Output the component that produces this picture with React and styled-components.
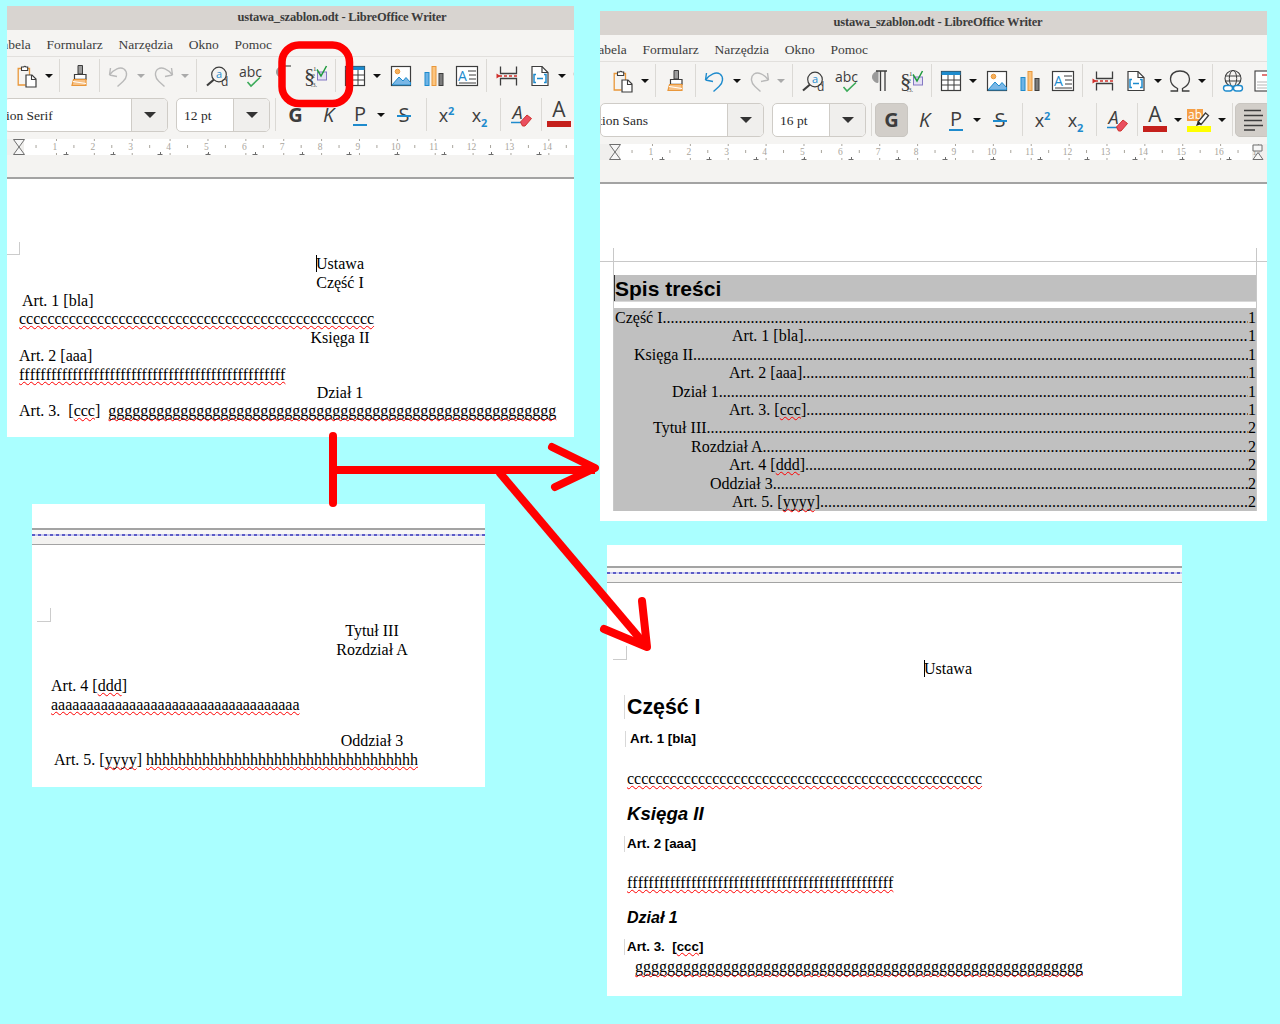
import React from "react";
import styled, { createGlobalStyle } from "styled-components";

const GlobalStyle = createGlobalStyle`
  html, body {
    margin: 0;
    padding: 0;
    background: #aaffff;
    font-family: "Liberation Serif", serif;
  }
`;

const Desktop = styled.div`
  position: relative;
  width: 1280px;
  height: 1024px;
  overflow: hidden;
  background: #aaffff;
`;

const Window = styled.div`
  position: absolute;
  left: ${(p) => p.$x}px;
  top: ${(p) => p.$y}px;
  width: ${(p) => p.$w}px;
  height: ${(p) => p.$h}px;
  overflow: hidden;
  background: #ffffff;
  color: #000000;
`;

const TitleBar = styled.div`
  height: 24px;
  background: #d8d4d0;
`;

const TitleText = styled.div`
  width: ${(p) => p.$center * 2}px;
  color: #3c3c3c;
  font-size: 12.5px;
  letter-spacing: -0.2px;
  font-weight: bold;
  line-height: 22px;
  text-align: center;
  white-space: nowrap;
`;

const Chrome = styled.div`
  width: 700px;
  margin-left: ${(p) => p.$shift}px;
`;

const MenuBackground = styled.div`
  background: #f5f4f2;
  border-bottom: 1px solid #e2e0dd;
  margin-left: ${(p) => -p.$shift}px;
`;

const MenuBar = styled.div`
  height: 26px;
  display: flex;
  align-items: center;
  gap: 15.7px;
  padding-top: 4px;
  box-sizing: border-box;
  margin-left: ${(p) => p.$shift - 9}px;
  font-size: 13.5px;
  color: #3c3c3c;
  white-space: nowrap;
`;

const ToolRow = styled.div`
  height: 36px;
  display: flex;
  align-items: center;
  box-sizing: border-box;
  padding: 1px 0 0 6px;
  background: #f5f4f2;
  width: 760px;
`;

const Slot = styled.div`
  flex: 0 0 33px;
  height: 24px;
  margin-left: ${(p) => p.$ml || 0}px;
  display: flex;
  align-items: center;
  justify-content: center;
`;

const DropArrow = styled.div`
  flex: 0 0 11px;
  height: 24px;
  display: flex;
  align-items: center;
  justify-content: center;

  &::after {
    content: "";
    border-left: 4px solid transparent;
    border-right: 4px solid transparent;
    border-top: 4px solid ${(p) => (p.$off ? "#aaaaaa" : "#111111")};
  }
`;

const Divider = styled.div`
  flex: 0 0 1px;
  height: 33px;
  margin: 0 ${(p) => p.$mr}px 0 ${(p) => p.$ml}px;
  background: #dbd9d5;
`;

const FormatRow = styled.div`
  height: 46px;
  display: flex;
  align-items: flex-start;
  padding-top: 5px;
  box-sizing: border-box;
  background: #f5f4f2;
  width: 760px;

  ${DropArrow}, ${Slot} {
    height: 34px;
  }
`;

const Combo = styled.div`
  flex: 0 0 ${(p) => p.$w}px;
  height: 34px;
  box-sizing: border-box;
  display: flex;
  margin-left: ${(p) => p.$ml || 0}px;
  border: 1px solid #cfccc7;
  border-radius: 5px;
  background: #ffffff;
  overflow: hidden;
`;

const ComboText = styled.div`
  flex: 1;
  overflow: hidden;
  white-space: pre;
  font-size: 13.5px;
  line-height: 34px;
  color: #2a2a2a;
  text-indent: ${(p) => p.$indent}px;
`;

const ComboButton = styled.div`
  flex: 0 0 35px;
  border-left: 1px solid #cfccc7;
  background: #f0efed;
  display: flex;
  align-items: center;
  justify-content: center;

  &::after {
    content: "";
    border-left: 6px solid transparent;
    border-right: 6px solid transparent;
    border-top: 6px solid #333333;
  }
`;

const FormatButton = styled.div`
  flex: 0 0 ${(p) => p.$w || 33}px;
  height: 34px;
  box-sizing: border-box;
  display: flex;
  align-items: center;
  justify-content: center;
  border-radius: 5px;
  color: #3d3d3d;
  font-family: "Open Sans", sans-serif;
  font-size: 20px;
  line-height: 1;
  background: ${(p) => (p.$on ? "#d2cec9" : "transparent")};
  border: 1px solid ${(p) => (p.$on ? "#c9c6c1" : "transparent")};
`;

const BoldGlyph = styled.span`
  font-weight: 700;
`;

const ItalicGlyph = styled.span`
  font-style: italic;
`;

const UnderGlyph = styled.span`
  border-bottom: 2px solid #1e8bcd;
  line-height: 20px;
  padding: 0 1px;
`;

const StrikeGlyph = styled.span`
  position: relative;
  padding: 0 2px;

  &::after {
    content: "";
    position: absolute;
    left: 0;
    right: 0;
    top: 10px;
    height: 2px;
    background: #1e8bcd;
  }
`;

const ScriptGlyph = styled.span`
  font-size: 18px;

  sup,
  sub {
    color: #1e8bcd;
    font-size: 11px;
    font-weight: 700;
    line-height: 0;
  }
`;

const FontColor = styled.div`
  flex: 0 0 34px;
  display: flex;
  flex-direction: column;
  align-items: center;
  height: 34px;
  font-family: "Open Sans", sans-serif;
  font-size: 21px;
  line-height: 23px;
  color: #3d3d3d;

  &::after {
    content: "";
    width: 24px;
    height: 6px;
    background: ${(p) => p.$bar};
  }
`;

const HighlightBox = styled.div`
  position: relative;
  flex: 0 0 24px;
  height: 23px;
  margin: 6px 5px 0 4px;
  font-family: "Open Sans", sans-serif;

  &::after {
    content: "";
    position: absolute;
    left: 0;
    top: 17px;
    width: 24px;
    height: 6px;
    background: #ffff00;
  }
`;

const HighlightText = styled.div`
  width: 16px;
  height: 12px;
  background: #f59f45;
  color: #ffffff;
  font-size: 12px;
  line-height: 11px;
  text-align: center;
`;

const PenIcon = styled.svg`
  position: absolute;
  left: 9px;
  top: 2px;
`;

const RulerBar = styled.svg`
  display: block;
  flex: none;
`;

const Band = styled.div`
  height: 22px;
  background: #f4f3f1;
  border-bottom: 2px solid #a3a3a3;
  margin-left: ${(p) => -p.$shift}px;
`;

const PageBreak = styled.div`
  margin-top: ${(p) => p.$top}px;
  height: 14px;
  background: linear-gradient(#f8f7f6 0 50%, #f3f2f0 50%);
  border-top: 2px solid #a3a3a3;
  border-bottom: 1px solid #a3a3a3;
  position: relative;

  &::after {
    content: "";
    display: block;
    height: 2px;
    margin-top: 4px;
    position: absolute;
    left: 0;
    right: 0;
    background: repeating-linear-gradient(90deg, #5c5cc6 0 3px, #c8c8f0 3px 6px);
  }
`;

const DocBody = styled.div`
  font-family: "Liberation Serif", serif;
  font-size: 16px;
  line-height: 18.36px;
  color: #000000;
  font-variant-ligatures: none;
`;

const CropMark = styled.div`
  width: ${(p) => p.$size}px;
  height: ${(p) => p.$size}px;
  margin-left: ${(p) => p.$left}px;
  margin-top: ${(p) => p.$top}px;
  box-sizing: border-box;
  border-right: 1px solid #cccccc;
  border-bottom: 1px solid #cccccc;
`;

const TextLine = styled.div`
  min-height: 18.36px;
  white-space: pre;
  padding-left: ${(p) => p.$at || 0}px;
  margin-top: ${(p) => p.$mt || 0}px;
`;

const CenterLine = styled.div`
  width: ${(p) => p.$center * 2}px;
  text-align: center;
  white-space: pre;
`;

const Caret = styled.span`
  display: inline-block;
  width: 1px;
  height: 17px;
  margin-right: -1px;
  background: #000000;
  vertical-align: -3px;
`;

const Misspelled = styled.span`
  font-kerning: none;
  text-decoration: underline wavy #ff0000;
  text-decoration-thickness: 1.3px;
  text-underline-offset: 1px;
  text-decoration-skip-ink: none;
`;

const SansBlock = styled.div`
  position: relative;
  font-family: "Liberation Sans", sans-serif;
  font-weight: bold;
  font-style: ${(p) => (p.$italic ? "italic" : "normal")};
  font-size: ${(p) => p.$size}px;
  line-height: ${(p) => p.$lh}px;
  margin-top: ${(p) => p.$mt}px;
  padding-left: ${(p) => p.$at}px;
  white-space: pre;
`;

const ParaMark = styled.span`
  position: absolute;
  left: ${(p) => p.$at - 3}px;
  top: 0;
  bottom: 0;
  width: 3px;
  border-left: 1px solid #d8d8d8;
`;

const TocSheet = styled.div`
  padding-top: 64px;
`;

const HeaderRule = styled.div`
  height: 13px;
  border-bottom: 1px solid #c8c8c8;
  padding: 0 10px 0 13px;

  &::before {
    content: "";
    display: block;
    height: 100%;
    border-left: 1px solid #c8c8c8;
    border-right: 1px solid #c8c8c8;
  }
`;

const TocFrame = styled.div`
  margin: 0 10px 0 13px;
  padding-top: 13px;
  border-left: 1px solid #c8c8c8;
  border-right: 1px solid #c8c8c8;
`;

const TocHeading = styled.div`
  height: 26px;
  padding-left: 1px;
  background: #c0c0c0;
  border-bottom: 1px solid #d8d8d8;
  box-shadow: inset 1px 0 0 #333333;
  font-family: "Liberation Sans", sans-serif;
  font-weight: bold;
  font-size: 21px;
  line-height: 27px;
`;

const TocList = styled.div`
  margin-top: 6px;
  padding-top: 1px;
  background: #c0c0c0;
`;

const TocRow = styled.div`
  display: flex;
  height: 18.4px;
  line-height: 18.4px;
  padding-left: ${(p) => p.$at}px;
  white-space: pre;
`;

const TocDots = styled.span`
  flex: 1;
  overflow: hidden;
`;

const TocPage = styled.span`
  flex: none;
`;

const OverlayInk = styled.svg`
  position: absolute;
  left: 0;
  top: 0;
  pointer-events: none;
`;

const DARK = "#3d3d3d";
const BLUE = "#1e8bcd";
const ORANGE = "#e9973a";
const GREEN = "#3cab5a";

const Icon = ({ children, w = 24, h = 24 }) => (
  <svg width={w} height={h} viewBox={`0 0 ${w} ${h}`} fill="none">
    {children}
  </svg>
);

const PasteIcon = () => (
  <Icon>
    <path d="M6.500 4.500H3.200V21H10.500" stroke={ORANGE} strokeWidth="1.300" />
    <path d="M12 4.500h2.500V11" stroke={ORANGE} strokeWidth="1.300" />
    <path d="M6.500 6.500V3h2.200a1.200 1.200 0 0 1 2.200 0h1.800v3.500z" stroke={DARK} strokeWidth="1.100" fill="#fff" />
    <path d="M11 11h6l4 4v8H11z" stroke={DARK} strokeWidth="1.200" fill="#fff" />
    <path d="M16.500 11v4.500h4.500" stroke={DARK} strokeWidth="1.100" />
  </Icon>
);

const BrushIcon = () => (
  <Icon>
    <path d="M10 1.500h4.500V10H10z" fill="#9c9c9c" stroke={DARK} strokeWidth="1" />
    <path d="M6.500 10.500h11.500v4.800H6.500z" stroke={DARK} strokeWidth="1.200" fill="#fff" />
    <path d="M5.500 15.500h12.500v6H4z" fill="#f7c185" stroke={ORANGE} strokeWidth="1.200" />
    <path d="M5 17.500l13 2" stroke="#fff" strokeWidth="1.200" />
  </Icon>
);

const UNDO_PATH = "M2.500 11L3.500 4M2.500 11L10 12.500M2.500 11C7 5 13 2.500 17 5C21 8 20 14 16 17.500L10.500 22.500";

const UndoIcon = ({ color }) => (
  <Icon>
    <path d={UNDO_PATH} stroke={color} strokeWidth="1.400" strokeLinejoin="round" />
  </Icon>
);

const RedoIcon = () => (
  <Icon>
    <path d={UNDO_PATH} stroke="#b9b9b9" strokeWidth="1.400" strokeLinejoin="round" transform="translate(24 0) scale(-1 1)" />
  </Icon>
);

const FindIcon = () => (
  <Icon>
    <circle cx="14" cy="10.500" r="7.300" stroke={DARK} strokeWidth="1.200" />
    <path d="M9 15.500l-7 6" stroke={DARK} strokeWidth="2.200" />
    <text x="14" y="14" textAnchor="middle" fontFamily="Open Sans" fontSize="11" fill={BLUE}>a</text>
    <text x="16" y="21.500" fontFamily="Open Sans" fontSize="12" fill={DARK}>d</text>
  </Icon>
);

const SpellIcon = () => (
  <Icon>
    <text x="1" y="13" fontFamily="Open Sans" fontSize="14" fill={DARK}>abc</text>
    <path d="M9.500 18l3.500 4 9-8.500" stroke={GREEN} strokeWidth="1.600" />
  </Icon>
);

// in the first window this button was painted out, only its edges are left
const PilcrowIcon = ({ erased }) => (
  <Icon>
    <path d="M11 2.500a5.500 5.500 0 0 0 0 11z" fill="#9a9a9a" stroke="#9a9a9a" strokeWidth="1" />
    {erased ? (
      <path d="M9 2h11" stroke={DARK} strokeWidth="1.100" />
    ) : (
      <path d="M9 2h11M13.500 2v20M18 2v20" stroke={DARK} strokeWidth="1.300" />
    )}
  </Icon>
);

const NumberingCheckIcon = () => (
  <Icon>
    <text x="0" y="18.500" fontFamily="Liberation Serif" fontSize="22" fill={DARK}>§</text>
    <text x="9" y="7" fontFamily="Liberation Serif" fontSize="7" fill={DARK}>1</text>
    <text x="7.500" y="14" fontFamily="Liberation Serif" fontSize="7" fill={DARK}>2</text>
    <text x="7" y="23" fontFamily="Liberation Serif" fontSize="6" fill={DARK}>.3.</text>
    <rect x="13.500" y="8" width="9" height="8" stroke="#8479c4" strokeWidth="1" fill="#e4e0f4" />
    <path d="M13 5.500l4 6.500 5.500-10" stroke="#1f9a3d" strokeWidth="1.500" />
  </Icon>
);

const TableIcon = () => (
  <Icon w={22} h={24}>
    <rect x="1.500" y="2.500" width="19" height="19" stroke={DARK} strokeWidth="1.200" fill="#fff" />
    <rect x="1.500" y="2.500" width="19" height="3.500" fill={BLUE} />
    <path d="M1.500 11h19M1.500 16h19M8 6v15M14 6v15" stroke={DARK} strokeWidth="1" />
  </Icon>
);

const ImageIcon = () => (
  <Icon>
    <rect x="2.500" y="2.500" width="19" height="19" stroke={DARK} strokeWidth="1.200" fill="#fff" />
    <circle cx="8.500" cy="7.500" r="2.300" fill="#f8b15b" stroke={ORANGE} />
    <path d="M3 21l7-8 4 4 3-3.500 4.500 5v2.500z" fill="#7ab7e6" stroke={BLUE} strokeWidth="1" />
  </Icon>
);

const ChartIcon = () => (
  <Icon>
    <rect x="3" y="8.500" width="4" height="13" fill="#6db3e6" stroke={BLUE} />
    <rect x="10" y="2.500" width="4" height="19" fill="#fbc47f" stroke={ORANGE} />
    <rect x="17" y="9.500" width="4" height="12" fill="#7c7c7c" stroke={DARK} />
  </Icon>
);

const TextBoxIcon = () => (
  <Icon>
    <rect x="1.500" y="2.500" width="21" height="19" stroke={DARK} strokeWidth="1.200" fill="#fff" />
    <text x="3" y="17" fontFamily="Open Sans" fontSize="14" fill={BLUE}>A</text>
    <path d="M13 7h8M14 11h7M14 15h7M4 19h17" stroke={DARK} strokeWidth="1" />
  </Icon>
);

const BreakIcon = () => (
  <Icon>
    <path d="M5.500 2.500v7h16v-7M5.500 21.500v-7h16v7" stroke={DARK} strokeWidth="1.300" fill="none" />
    <path d="M4 12h18" stroke="#d0312d" strokeWidth="1.500" strokeDasharray="3 2" />
    <path d="M1.500 9.500l4 2.500-4 2.500z" fill="#d0312d" />
  </Icon>
);

const FieldIcon = () => (
  <Icon w={18} h={24}>
    <path d="M1 2.500h10l6 6v13H1z" stroke={DARK} strokeWidth="1.200" fill="#fff" />
    <path d="M11 2.500v6h6" stroke={DARK} strokeWidth="1.200" />
    <path d="M5 10.500H3v8h2M13 10.500h2v8h-2M6 14.500h6" stroke={BLUE} strokeWidth="1.500" />
  </Icon>
);

const OmegaIcon = () => (
  <Icon>
    <path d="M2.500 22h7v-2.500C5.500 17.500 2.500 14.500 2.500 10 2.500 5 6.500 2 12 2s9.500 3 9.500 8c0 4.500-3 7.500-7 9.500V22h7" stroke={DARK} strokeWidth="1.300" />
  </Icon>
);

const GlobeLinkIcon = () => (
  <Icon>
    <circle cx="12" cy="9.500" r="8" stroke={DARK} strokeWidth="1.100" />
    <ellipse cx="12" cy="9.500" rx="3.700" ry="8" stroke={DARK} strokeWidth="1" />
    <path d="M4 7h16M4 12h16" stroke={DARK} strokeWidth="1" />
    <rect x="2.500" y="16.500" width="9" height="5.500" rx="2.700" stroke={BLUE} strokeWidth="1.400" fill="#fff" />
    <rect x="12.500" y="16.500" width="9" height="5.500" rx="2.700" stroke={BLUE} strokeWidth="1.400" fill="#fff" />
  </Icon>
);

const HeaderPageIcon = () => (
  <Icon>
    <rect x="1" y="2" width="22" height="20" stroke={DARK} strokeWidth="1.100" fill="#fff" />
    <path d="M8 6h12" stroke="#d0312d" strokeWidth="1.300" />
    <path d="M3 13h18M3 16h18M3 19h18" stroke="#b5b5b5" strokeWidth="1" />
  </Icon>
);

const ClearFormatIcon = () => (
  <Icon>
    <text x="3.500" y="16" fontFamily="Open Sans" fontStyle="italic" fontSize="18" fill={DARK}>A</text>
    <path d="M2 19.500h11" stroke={BLUE} strokeWidth="1.500" />
    <path d="M11.500 19l6.500-7 4.500 3.500-6.500 7.500h-2.500z" fill="#ea4f5f" stroke="#d0312d" strokeWidth="1" />
  </Icon>
);

const AlignLeftIcon = () => (
  <Icon>
    <path d="M3 2.500h17M3 7.500h19M3 12.500h18M3 17.500h19M3 22h11" stroke={DARK} strokeWidth="1.300" />
  </Icon>
);

const Ruler = () => {
  const numbers = Array.from({ length: 17 }, (_, i) => i + 1);
  const cell = 37.875;
  const at = (n) => 13.1 + cell * n;
  return (
    <RulerBar width="667" height="16">
      <rect width="20" height="16" fill="#f0efed" />
      <rect x="20" width="632" height="16" fill="#ffffff" />
      <rect x="652" width="15" height="16" fill="#f0efed" />
      {numbers.map((n) => (
        <g key={n}>
          <text x={at(n)} y="11" textAnchor="middle" fontFamily="Liberation Serif" fontSize="9.500" fill="#a9a59d">{n}</text>
          <path d={`M${at(n) + 1.500} 0v2M${at(n) + 1.500} 14v2M${at(n) - cell / 2} 6v3`} stroke="#a9a59d" strokeWidth="1" />
        </g>
      ))}
      {Array.from({ length: 13 }, (_, i) => 61.700 + i * 47.300).map((x) => (
        <path key={x} d={`M${Math.round(x) - 2.500} 15.500h5M${Math.round(x) + 0.500} 13v3`} stroke="#6e6e6e" strokeWidth="1" />
      ))}
      <path d="M9.500 0.500h11l-5.500 7.500 5.500 7.500h-11l5.500-7.500z" fill="#f7f7f7" stroke="#6e6e6e" />
      <path d="M653 1h9v6h-9zM653 15.500l5-7 5 7z" fill="#f7f7f7" stroke="#6e6e6e" />
    </RulerBar>
  );
};

const WriterChrome = ({ shift, undoOn, boldOn, pilcrowErased, fontName, fontIndent, size }) => (
  <Chrome $shift={shift}>
    <MenuBackground $shift={shift}>
      <MenuBar $shift={shift}>
        <span>Tabela</span>
        <span>Formularz</span>
        <span>Narzędzia</span>
        <span>Okno</span>
        <span>Pomoc</span>
      </MenuBar>
    </MenuBackground>
    <ToolRow>
      <Slot><PasteIcon /></Slot>
      <DropArrow />
      <Divider $ml={5} $mr={3} />
      <Slot><BrushIcon /></Slot>
      <Divider $ml={3} $mr={2} />
      <Slot><UndoIcon color={undoOn ? BLUE : "#b9b9b9"} /></Slot>
      <DropArrow $off={!undoOn} />
      <Slot><RedoIcon /></Slot>
      <DropArrow $off />
      <Divider $ml={6} $mr={3} />
      <Slot><FindIcon /></Slot>
      <Slot><SpellIcon /></Slot>
      <Slot><PilcrowIcon erased={pilcrowErased} /></Slot>
      <Slot><NumberingCheckIcon /></Slot>
      <Divider $ml={3} $mr={2} />
      <Slot><TableIcon /></Slot>
      <DropArrow />
      <Slot $ml={2}><ImageIcon /></Slot>
      <Slot><ChartIcon /></Slot>
      <Slot><TextBoxIcon /></Slot>
      <Divider $ml={3} $mr={3} />
      <Slot><BreakIcon /></Slot>
      <Slot><FieldIcon /></Slot>
      <DropArrow />
      <Slot><OmegaIcon /></Slot>
      <DropArrow />
      <Divider $ml={5} $mr={3} />
      <Slot><GlobeLinkIcon /></Slot>
      <Slot><HeaderPageIcon /></Slot>
    </ToolRow>
    <FormatRow>
      <Combo $w={164}>
        <ComboText $indent={fontIndent}>{fontName}</ComboText>
        <ComboButton />
      </Combo>
      <Combo $w={94} $ml={8}>
        <ComboText $indent={7}>{size}</ComboText>
        <ComboButton />
      </Combo>
      <Divider $ml={5} $mr={3} />
      <FormatButton $on={boldOn}><BoldGlyph>G</BoldGlyph></FormatButton>
      <FormatButton><ItalicGlyph>K</ItalicGlyph></FormatButton>
      <FormatButton $w={30}><UnderGlyph>P</UnderGlyph></FormatButton>
      <DropArrow />
      <FormatButton $w={36}><StrikeGlyph>S</StrikeGlyph></FormatButton>
      <Divider $ml={4} $mr={3} />
      <FormatButton><ScriptGlyph>x<sup>2</sup></ScriptGlyph></FormatButton>
      <FormatButton><ScriptGlyph>x<sub>2</sub></ScriptGlyph></FormatButton>
      <Divider $ml={4} $mr={3} />
      <Slot><ClearFormatIcon /></Slot>
      <Divider $ml={4} $mr={0} />
      <FontColor $bar="#c5201c">A</FontColor>
      <DropArrow />
      <HighlightBox>
        <HighlightText>ab</HighlightText>
        <PenIcon width="14" height="15" viewBox="0 0 14 15" fill="none">
          <path d="M2 11l7.500-9 3 2.500-7.500 9z" fill="#ffffff" stroke="#3d3d3d" strokeWidth="1.300" />
          <path d="M0 15l2-5 3.500 3z" fill="#222222" />
        </PenIcon>
      </HighlightBox>
      <DropArrow />
      <Divider $ml={5} $mr={2} />
      <FormatButton $on $w={36}><AlignLeftIcon /></FormatButton>
    </FormatRow>
    <Ruler />
    <Band $shift={shift} />
  </Chrome>
);

const cs = "c".repeat(50);
const fs = "f".repeat(50);
const gs = "g".repeat(56);
const as = "a".repeat(35);
const hs = "h".repeat(34);

const tocEntries = [
  { at: 1, label: "Część I", page: 1 },
  { at: 118, label: "Art. 1 [bla]", page: 1 },
  { at: 20, label: "Księga II", page: 1 },
  { at: 115, label: "Art. 2 [aaa]", page: 1 },
  { at: 58, label: "Dział 1", page: 1 },
  { at: 115, before: "Art. 3. [", word: "ccc", after: "]", page: 1 },
  { at: 39, label: "Tytuł III", page: 2 },
  { at: 77, label: "Rozdział A", page: 2 },
  { at: 115, before: "Art. 4 [", word: "ddd", after: "]", page: 2 },
  { at: 96, label: "Oddział 3", page: 2 },
  { at: 118, before: "Art. 5. [", word: "yyyy", after: "]", page: 2 },
];

const dots = ".".repeat(200);

const Annotations = () => (
  <OverlayInk width="1280" height="1024" fill="none" stroke="#ff0000" strokeLinecap="round" strokeLinejoin="round">
    <rect x="282" y="45" width="67.500" height="58.500" rx="17" strokeWidth="7.500" />
    <path d="M333 436V503" strokeWidth="8" />
    <path d="M333 470H595" strokeWidth="8" strokeLinecap="butt" />
    <path d="M552 447L595 468L555 487" strokeWidth="8" />
    <path d="M499 472L647 647" strokeWidth="8" strokeLinecap="butt" />
    <path d="M642 601L647 647L604 629" strokeWidth="8" />
  </OverlayInk>
);

export default function App() {
  return (
    <Desktop>
      <GlobalStyle />

      <Window $x={7} $y={6} $w={567} $h={431}>
        <TitleBar><TitleText $center={335}>ustawa_szablon.odt - LibreOffice Writer</TitleText></TitleBar>
        <WriterChrome shift={-3} pilcrowErased fontName="Liberation Serif" fontIndent={-38} size="12 pt" />
        <DocBody>
          <CropMark $size={13} $left={0} $top={63.4} />
          <CenterLine $center={333}><Caret />Ustawa</CenterLine>
          <CenterLine $center={333}>Część I</CenterLine>
          <TextLine $at={15}>Art. 1 [bla]</TextLine>
          <TextLine $at={12}><Misspelled>{cs}</Misspelled></TextLine>
          <CenterLine $center={333}>Księga II</CenterLine>
          <TextLine $at={12}>Art. 2 [aaa]</TextLine>
          <TextLine $at={12}><Misspelled>{fs}</Misspelled></TextLine>
          <CenterLine $center={333}>Dział 1</CenterLine>
          <TextLine $at={12}>{"Art. 3.  ["}<Misspelled>ccc</Misspelled>{"]  "}<Misspelled>{gs}</Misspelled></TextLine>
        </DocBody>
      </Window>

      <Window $x={600} $y={11} $w={667} $h={510}>
        <TitleBar><TitleText $center={338}>ustawa_szablon.odt - LibreOffice Writer</TitleText></TitleBar>
        <WriterChrome shift={0} undoOn boldOn fontName="Liberation Sans" fontIndent={-38} size="16 pt" />
        <DocBody>
          <TocSheet>
            <HeaderRule />
            <TocFrame>
              <TocHeading>Spis treści</TocHeading>
              <TocList>
                {tocEntries.map((entry) => (
                  <TocRow key={entry.at + (entry.label || entry.word)} $at={entry.at}>
                    <span>
                      {entry.label || entry.before}
                      {entry.word && <Misspelled>{entry.word}</Misspelled>}
                      {entry.after}
                    </span>
                    <TocDots>{dots}</TocDots>
                    <TocPage>{entry.page}</TocPage>
                  </TocRow>
                ))}
              </TocList>
            </TocFrame>
          </TocSheet>
        </DocBody>
      </Window>

      <Window $x={32} $y={504} $w={453} $h={283}>
        <PageBreak $top={24} />
        <DocBody>
          <CropMark $size={14} $left={5} $top={63.2} />
          <CenterLine $center={340}>Tytuł III</CenterLine>
          <CenterLine $center={340}>Rozdział A</CenterLine>
          <TextLine />
          <TextLine $at={19}>{"Art. 4 ["}<Misspelled>ddd</Misspelled>]</TextLine>
          <TextLine $at={19}><Misspelled>{as}</Misspelled></TextLine>
          <TextLine />
          <CenterLine $center={340}>Oddział 3</CenterLine>
          <TextLine $at={22}>{"Art. 5. ["}<Misspelled>yyyy</Misspelled>{"] "}<Misspelled>{hs}</Misspelled></TextLine>
        </DocBody>
      </Window>

      <Window $x={607} $y={545} $w={575} $h={451}>
        <PageBreak $top={21} />
        <DocBody>
          <CropMark $size={14} $left={6} $top={63} />
          <CenterLine $center={341}><Caret />Ustawa</CenterLine>
          <SansBlock $size={21.33} $lh={24} $mt={17} $at={20}><ParaMark $at={20} />Część I</SansBlock>
          <SansBlock $size={13.33} $lh={16} $mt={12} $at={23}><ParaMark $at={21} />Art. 1 [bla]</SansBlock>
          <TextLine $at={20} $mt={23}><Misspelled>{cs}</Misspelled></TextLine>
          <SansBlock $italic $size={18.67} $lh={22} $mt={14} $at={20}>Księga II</SansBlock>
          <SansBlock $size={13.33} $lh={16} $mt={11} $at={20}><ParaMark $at={20} />Art. 2 [aaa]</SansBlock>
          <TextLine $at={20} $mt={22}><Misspelled>{fs}</Misspelled></TextLine>
          <SansBlock $italic $size={16} $lh={20} $mt={16} $at={20}>Dział 1</SansBlock>
          <SansBlock $size={13.33} $lh={16} $mt={11} $at={20}><ParaMark $at={20} />{"Art. 3.  ["}<Misspelled>ccc</Misspelled>]</SansBlock>
          <TextLine $at={28} $mt={3}><Misspelled>{gs}</Misspelled></TextLine>
        </DocBody>
      </Window>

      <Annotations />
    </Desktop>
  );
}
